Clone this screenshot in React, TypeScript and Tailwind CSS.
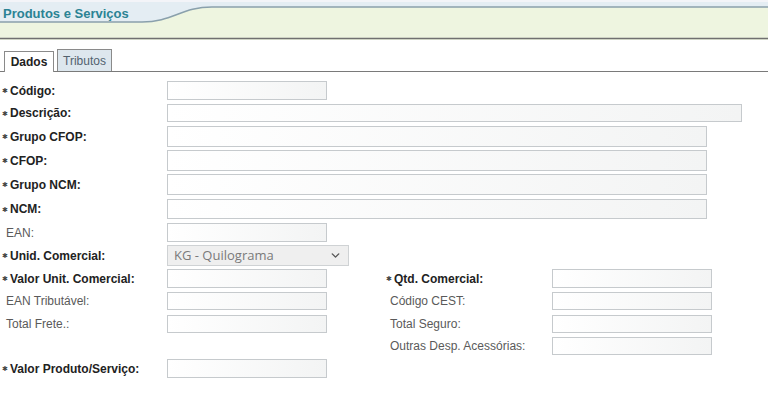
import { ChevronDown } from "lucide-react";

type Field = { label: string; req?: boolean; w?: string; h: string; input: string };

const font = { fontFamily: '"Liberation Sans", Arial, sans-serif' };

const Label = ({ text, req, h }: { text: string; req?: boolean; h: string }) => (
  <div className={`flex items-center ${h}`}>
    {req ? (
      <span className="w-[9px] pl-[1px] text-[7px] leading-none text-[#444]">✱</span>
    ) : (
      <span className="w-[5px]" />
    )}
    <span className={req ? "text-[12px] font-bold text-[#222]" : "text-[12px] text-[#5a5a5a]"}>{text}</span>
  </div>
);

const Box = ({ w, h }: { w: string; h: string }) => (
  <div className={`${w} ${h} border border-[#c6cacd] bg-gradient-to-r from-white to-[#f3f4f4]`} />
);

const Header = () => (
  <div className="relative h-[40px]">
    <svg className="absolute inset-0" width="768" height="40" viewBox="0 0 768 40" preserveAspectRatio="none">
      <rect x="0" y="0" width="768" height="40" fill="#eef5e0" />
      <path d="M0 0 H768 V7 H212 C182 7 172 22 142 22 H0 Z" fill="#e4edf3" />
      <rect x="0" y="0" width="768" height="2" fill="#f3f4f8" />
      <path d="M0 22 H142 C172 22 182 7 212 7 H768" fill="none" stroke="#8aa0ac" strokeWidth="1.6" />
      <line x1="0" y1="38.5" x2="768" y2="38.5" stroke="#707070" strokeWidth="1.4" />
    </svg>
    <div className="relative pl-[3px] pt-[4px] text-[13px] font-bold text-[#2b8394]">Produtos e Serviços</div>
  </div>
);

const Tabs = () => (
  <div className="flex items-end h-[32px] border-b border-[#7a7a7a] pl-[4px] gap-[3px]">
    <div className="h-[21px] w-[50px] -mb-[1px] border border-b-0 border-[#8a8a8a] bg-white flex items-center justify-center text-[12px] font-bold text-[#222]">
      Dados
    </div>
    <div className="h-[22px] w-[55px] border border-b-0 border-[#8a8a8a] bg-[#dde7ee] flex items-center justify-center text-[12px] text-[#52626e]">
      Tributos
    </div>
  </div>
);

const rows: Field[] = [
  { label: "Código:", req: true, h: "h-[20px]", input: "h-[19px]", w: "w-[160px]" },
  { label: "Descrição:", req: true, h: "h-[19px]", input: "h-[18px]", w: "w-[575px]" },
  { label: "Grupo CFOP:", req: true, h: "h-[21px]", input: "h-[21px]", w: "w-[540px]" },
  { label: "CFOP:", req: true, h: "h-[21px]", input: "h-[21px]", w: "w-[540px]" },
  { label: "Grupo NCM:", req: true, h: "h-[22px]", input: "h-[21px]", w: "w-[540px]" },
  { label: "NCM:", req: true, h: "h-[21px]", input: "h-[20px]", w: "w-[540px]" },
  { label: "EAN:", h: "h-[19px]", input: "h-[19px]", w: "w-[160px]" },
];

const pairs: { l: Field; r?: Field; h: string }[] = [
  {
    h: "h-[20px]",
    l: { label: "Valor Unit. Comercial:", req: true, h: "h-[19px]", input: "h-[19px]" },
    r: { label: "Qtd. Comercial:", req: true, h: "h-[19px]", input: "h-[19px]" },
  },
  {
    h: "h-[20px]",
    l: { label: "EAN Tributável:", h: "h-[18px]", input: "h-[18px]" },
    r: { label: "Código CEST:", h: "h-[18px]", input: "h-[18px]" },
  },
  {
    h: "h-[19px]",
    l: { label: "Total Frete.:", h: "h-[18px]", input: "h-[18px]" },
    r: { label: "Total Seguro:", h: "h-[18px]", input: "h-[18px]" },
  },
  {
    h: "h-[19px]",
    l: { label: "", h: "h-[18px]", input: "" },
    r: { label: "Outras Desp. Acessórias:", h: "h-[18px]", input: "h-[18px]" },
  },
  {
    h: "h-[19px]",
    l: { label: "Valor Produto/Serviço:", req: true, h: "h-[19px]", input: "h-[19px]" },
  },
];

export default function App() {
  return (
    <div className="w-[768px] h-[405px] bg-white overflow-hidden" style={font}>
      <Header />
      <Tabs />
      <div className="flex flex-col gap-[3px] pt-[9px] pl-[1px]">
        {rows.map((r) => (
          <div key={r.label} className={`flex items-start ${r.h}`}>
            <div className="w-[166px]">
              <Label text={r.label} req={r.req} h={r.input} />
            </div>
            <Box w={r.w ?? "w-[160px]"} h={r.input} />
          </div>
        ))}
        <div className="flex items-start h-[21px]">
          <div className="w-[166px]">
            <Label text="Unid. Comercial:" req h="h-[21px]" />
          </div>
          <div className="w-[182px] h-[21px] border border-[#cfd2d4] bg-[#efefef] flex items-center justify-between pl-[6px] pr-[6px]">
            <span className="text-[13px] text-[#7a7a7a]" style={{ fontFamily: '"Open Sans", sans-serif' }}>
              KG - Quilograma
            </span>
            <ChevronDown className="w-[13px] h-[13px] text-[#555]" strokeWidth={2.5} />
          </div>
        </div>
        {pairs.map((p, i) => (
          <div key={i} className={`flex items-start ${p.h}`}>
            <div className="w-[166px]">
              {p.l.label && <Label text={p.l.label} req={p.l.req} h={p.l.input} />}
            </div>
            <div className="w-[218px]">{p.l.input && <Box w="w-[160px]" h={p.l.input} />}</div>
            {p.r && (
              <>
                <div className="w-[167px]">
                  <Label text={p.r.label} req={p.r.req} h={p.r.input} />
                </div>
                <Box w="w-[160px]" h={p.r.input} />
              </>
            )}
          </div>
        ))}
      </div>
    </div>
  );
}
